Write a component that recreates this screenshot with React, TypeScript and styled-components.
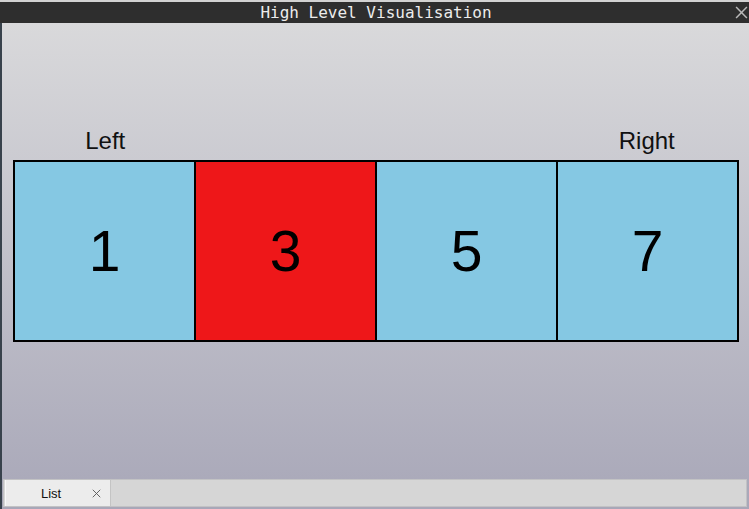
import * as React from 'react'
import styled, { createGlobalStyle } from 'styled-components'

const GlobalStyle = createGlobalStyle`
  html, body {
    margin: 0;
    padding: 0;
    height: 100%;
    overflow: hidden;
  }
  #root {
    height: 100%;
  }
`

const StyledWindow = styled.div`
  height: 100vh;
  display: flex;
  flex-direction: column;
  background-color: #d2d2d2;
  padding-top: 2px;
  box-sizing: border-box;
`

const StyledTitleBar = styled.div`
  height: 21px;
  flex: none;
  position: relative;
  display: flex;
  align-items: center;
  justify-content: center;
  background-color: #2e2e2e;
  color: #ececec;
  font-family: 'DejaVu Sans Mono', monospace;
  font-size: 16px;
  padding-left: 3px;
`

const StyledCloseButton = styled.div`
  position: absolute;
  right: 1px;
  top: 4px;
  width: 13px;
  height: 13px;
  display: flex;
`

const StyledBody = styled.div`
  flex: 1;
  display: flex;
  flex-direction: row;
  min-height: 0;
`

const StyledLeftEdge = styled.div`
  width: 2px;
  flex: none;
  background-color: #38424c;
`

const StyledMain = styled.div`
  flex: 1;
  display: flex;
  flex-direction: column;
  background: linear-gradient(to bottom, #d9d9db 0%, #a8a7b8 100%);
`

const StyledStage = styled.div`
  flex: 1;
  padding: 104px 10px 0 11px;
  display: flex;
  flex-direction: column;
  gap: 6px;
`

const StyledLabelRow = styled.div`
  display: grid;
  grid-template-columns: repeat(4, 1fr);
  padding: 0 2px;
`

const StyledLabel = styled.div`
  font-family: 'Liberation Sans', Arial, sans-serif;
  font-size: 24px;
  line-height: 27px;
  height: 27px;
  text-align: center;
  color: #111;
`

const StyledStrip = styled.div`
  display: flex;
  flex-direction: row;
  height: 178px;
  border: 2px solid #000;
`

const StyledCell = styled.div<{ $active?: boolean }>`
  flex: 1;
  display: flex;
  align-items: center;
  justify-content: center;
  background-color: ${({ $active }) => ($active ? '#ee1719' : '#85c8e3')};
  font-family: 'Liberation Sans', Arial, sans-serif;
  font-size: 57px;
  color: #000;

  & + & {
    border-left: 2px solid #000;
  }
`

const StyledTabBar = styled.div`
  height: 26px;
  flex: none;
  margin: 0 2px 2px 1px;
  padding-left: 1px;
  display: flex;
  flex-direction: row;
  background-color: #d6d6d6;
  border: 1px solid #c2c2c4;
`

const StyledTab = styled.div`
  width: 106px;
  display: flex;
  align-items: center;
  justify-content: flex-start;
  gap: 31px;
  padding-left: 35px;
  box-sizing: border-box;
  background-color: #ececec;
  border-left: 1px solid #f8f8f8;
  border-right: 1px solid #c4c4c4;
  font-family: 'Liberation Sans', Arial, sans-serif;
  font-size: 13px;
  color: #111;
`

const CloseIcon = ({ size, color, width }: { size: number; color: string; width: number }) => (
  <svg width={size} height={size} viewBox="0 0 12 12">
    <path d="M1 1 L11 11 M11 1 L1 11" stroke={color} strokeWidth={width} fill="none" />
  </svg>
)

const cells = [
  { value: 1, active: false },
  { value: 3, active: true },
  { value: 5, active: false },
  { value: 7, active: false },
]

const App = () => {
  return (
    <>
      <GlobalStyle />
      <StyledWindow>
        <StyledTitleBar>
          High Level Visualisation
          <StyledCloseButton>
            <CloseIcon size={13} color="#b8b8b8" width={1.4} />
          </StyledCloseButton>
        </StyledTitleBar>

        <StyledBody>
          <StyledLeftEdge />
          <StyledMain>
            <StyledStage>
              <StyledLabelRow>
                <StyledLabel>Left</StyledLabel>
                <StyledLabel />
                <StyledLabel />
                <StyledLabel>Right</StyledLabel>
              </StyledLabelRow>
              <StyledStrip>
                {cells.map((cell) => (
                  <StyledCell key={cell.value} $active={cell.active}>
                    {cell.value}
                  </StyledCell>
                ))}
              </StyledStrip>
            </StyledStage>

            <StyledTabBar>
              <StyledTab>
                List
                <CloseIcon size={9} color="#555" width={1.2} />
              </StyledTab>
            </StyledTabBar>
          </StyledMain>
        </StyledBody>
      </StyledWindow>
    </>
  )
}

export default App
